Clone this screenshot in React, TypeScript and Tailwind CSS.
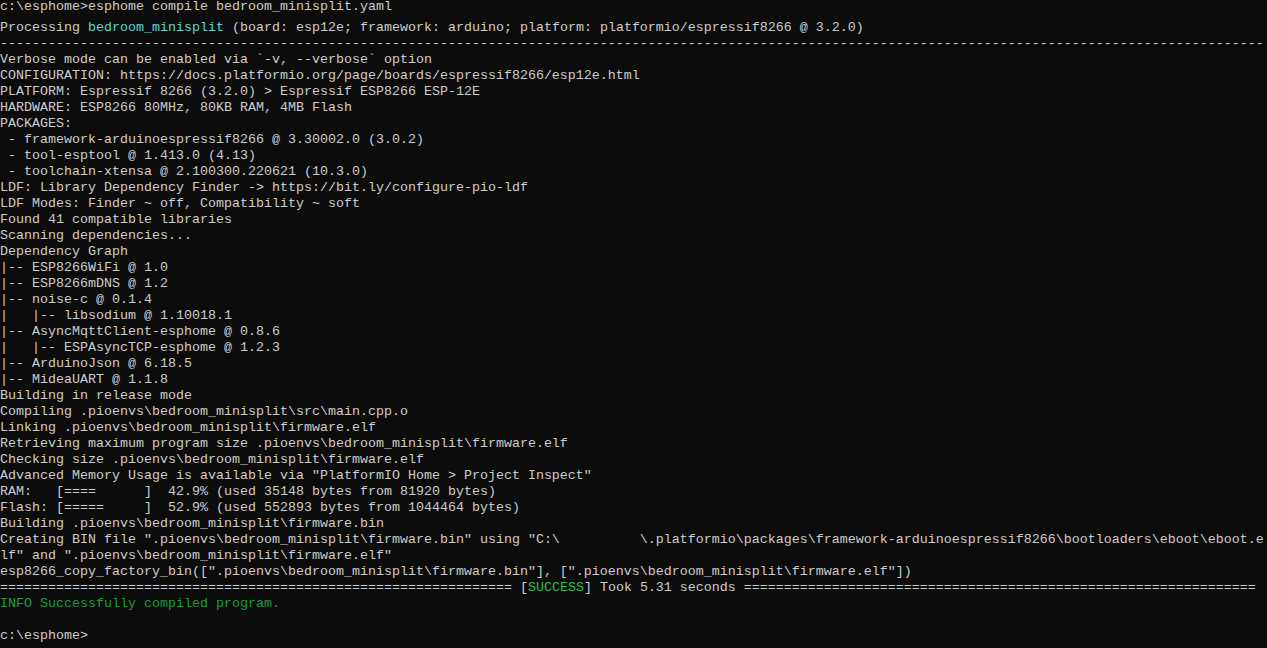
type Seg = { text: string; color?: string };
type Line = string | Seg[];

const dashes = "-".repeat(158);
const equals = "=".repeat(64);

const lines: Line[] = [
  [
    { text: "Processing " },
    { text: "bedroom_minisplit", color: "cyan" },
    {
      text: " (board: esp12e; framework: arduino; platform: platformio/espressif8266 @ 3.2.0)",
    },
  ],
  dashes,
  "Verbose mode can be enabled via `-v, --verbose` option",
  "CONFIGURATION: https://docs.platformio.org/page/boards/espressif8266/esp12e.html",
  "PLATFORM: Espressif 8266 (3.2.0) > Espressif ESP8266 ESP-12E",
  "HARDWARE: ESP8266 80MHz, 80KB RAM, 4MB Flash",
  "PACKAGES:",
  " - framework-arduinoespressif8266 @ 3.30002.0 (3.0.2)",
  " - tool-esptool @ 1.413.0 (4.13)",
  " - toolchain-xtensa @ 2.100300.220621 (10.3.0)",
  "LDF: Library Dependency Finder -> https://bit.ly/configure-pio-ldf",
  "LDF Modes: Finder ~ off, Compatibility ~ soft",
  "Found 41 compatible libraries",
  "Scanning dependencies...",
  "Dependency Graph",
  "|-- ESP8266WiFi @ 1.0",
  "|-- ESP8266mDNS @ 1.2",
  "|-- noise-c @ 0.1.4",
  "|   |-- libsodium @ 1.10018.1",
  "|-- AsyncMqttClient-esphome @ 0.8.6",
  "|   |-- ESPAsyncTCP-esphome @ 1.2.3",
  "|-- ArduinoJson @ 6.18.5",
  "|-- MideaUART @ 1.1.8",
  "Building in release mode",
  "Compiling .pioenvs\\bedroom_minisplit\\src\\main.cpp.o",
  "Linking .pioenvs\\bedroom_minisplit\\firmware.elf",
  "Retrieving maximum program size .pioenvs\\bedroom_minisplit\\firmware.elf",
  "Checking size .pioenvs\\bedroom_minisplit\\firmware.elf",
  'Advanced Memory Usage is available via "PlatformIO Home > Project Inspect"',
  "RAM:   [====      ]  42.9% (used 35148 bytes from 81920 bytes)",
  "Flash: [=====     ]  52.9% (used 552893 bytes from 1044464 bytes)",
  "Building .pioenvs\\bedroom_minisplit\\firmware.bin",
  'Creating BIN file ".pioenvs\\bedroom_minisplit\\firmware.bin" using "C:\\          \\.platformio\\packages\\framework-arduinoespressif8266\\bootloaders\\eboot\\eboot.e',
  'lf" and ".pioenvs\\bedroom_minisplit\\firmware.elf"',
  'esp8266_copy_factory_bin([".pioenvs\\bedroom_minisplit\\firmware.bin"], [".pioenvs\\bedroom_minisplit\\firmware.elf"])',
  [
    { text: equals + " " },
    { text: "[" },
    { text: "SUCCESS", color: "green" },
    { text: "] Took 5.31 seconds " + equals },
  ],
  [{ text: "INFO Successfully compiled program.", color: "info" }],
  "",
  "c:\\esphome>",
];

const colorClass: Record<string, string> = {
  cyan: "text-[#61d6d6]",
  green: "text-[#2dbf4c]",
  info: "text-[#1c9c3e]",
};

function TermLine({ line }: { line: Line }) {
  if (typeof line === "string") {
    return <div className="h-4 whitespace-pre">{line || " "}</div>;
  }
  return (
    <div className="h-4 whitespace-pre">
      {line.map((seg, i) => (
        <span key={i} className={seg.color ? colorClass[seg.color] : undefined}>
          {seg.text}
        </span>
      ))}
    </div>
  );
}

export default function App() {
  return (
    <div className="h-screen w-full overflow-hidden bg-[#0c0c0c] text-[#cccccc] font-['Liberation_Mono',monospace] text-[13.34px] leading-4">
      {/* prompt line sits a bit apart from the build output */}
      <div className="-mt-px mb-[5px] h-4 whitespace-pre">
        c:\esphome&gt;esphome compile bedroom_minisplit.yaml
      </div>
      {lines.map((line, i) => (
        <TermLine key={i} line={line} />
      ))}
    </div>
  );
}
